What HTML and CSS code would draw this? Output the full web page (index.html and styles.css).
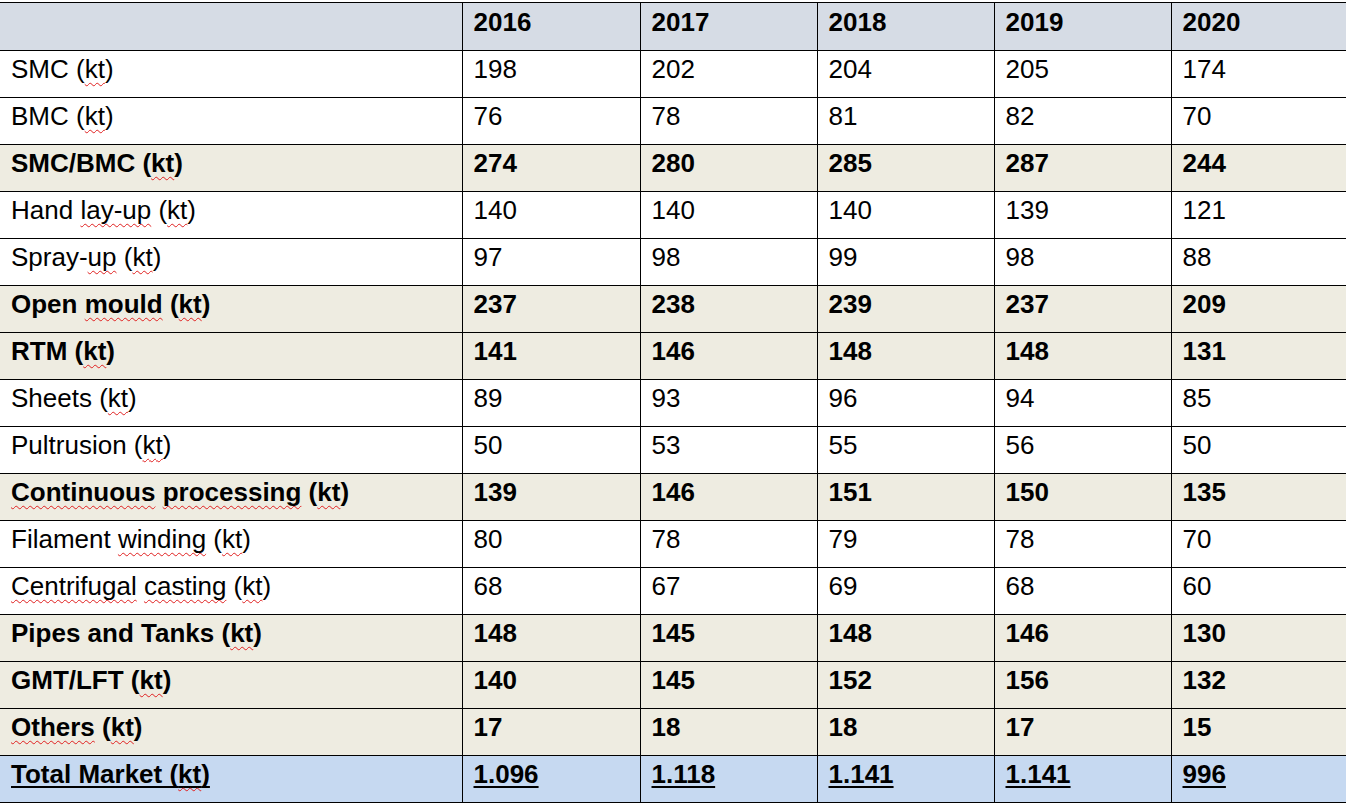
FILE: index.html
```html
<!DOCTYPE html>
<html>
<head>
<meta charset="utf-8">
<link rel="stylesheet" href="styles.css">
</head>
<body>
<div class="page">
<table class="data">
<colgroup>
<col class="c-label"><col class="c-a"><col class="c-b"><col class="c-b"><col class="c-b"><col class="c-last">
</colgroup>
<thead>
<tr class="head"><th></th><th>2016</th><th>2017</th><th>2018</th><th>2019</th><th>2020</th></tr>
</thead>
<tbody>
<tr><td>SMC (<span class="sp">kt</span>)</td><td>198</td><td>202</td><td>204</td><td>205</td><td>174</td></tr>
<tr><td>BMC (<span class="sp">kt</span>)</td><td>76</td><td>78</td><td>81</td><td>82</td><td>70</td></tr>
<tr class="sum"><td>SMC/BMC (<span class="sp">kt</span>)</td><td>274</td><td>280</td><td>285</td><td>287</td><td>244</td></tr>
<tr><td>Hand <span class="sp">lay-up</span> (<span class="sp">kt</span>)</td><td>140</td><td>140</td><td>140</td><td>139</td><td>121</td></tr>
<tr><td>Spray-<span class="sp">up</span> (<span class="sp">kt</span>)</td><td>97</td><td>98</td><td>99</td><td>98</td><td>88</td></tr>
<tr class="sum"><td>Open <span class="sp">mould</span> (<span class="sp">kt</span>)</td><td>237</td><td>238</td><td>239</td><td>237</td><td>209</td></tr>
<tr class="sum"><td>RTM (<span class="sp">kt</span>)</td><td>141</td><td>146</td><td>148</td><td>148</td><td>131</td></tr>
<tr><td>Sheets (<span class="sp">kt</span>)</td><td>89</td><td>93</td><td>96</td><td>94</td><td>85</td></tr>
<tr><td>Pultrusion (<span class="sp">kt</span>)</td><td>50</td><td>53</td><td>55</td><td>56</td><td>50</td></tr>
<tr class="sum"><td><span class="sp">Continuous</span> <span class="sp">processing</span> (<span class="sp">kt</span>)</td><td>139</td><td>146</td><td>151</td><td>150</td><td>135</td></tr>
<tr><td>Filament <span class="sp">winding</span> (<span class="sp">kt</span>)</td><td>80</td><td>78</td><td>79</td><td>78</td><td>70</td></tr>
<tr><td><span class="sp">Centrifugal</span> <span class="sp">casting</span> (<span class="sp">kt</span>)</td><td>68</td><td>67</td><td>69</td><td>68</td><td>60</td></tr>
<tr class="sum"><td>Pipes and Tanks (<span class="sp">kt</span>)</td><td>148</td><td>145</td><td>148</td><td>146</td><td>130</td></tr>
<tr class="sum"><td>GMT/LFT (<span class="sp">kt</span>)</td><td>140</td><td>145</td><td>152</td><td>156</td><td>132</td></tr>
<tr class="sum"><td><span class="sp">Others</span> (<span class="sp">kt</span>)</td><td>17</td><td>18</td><td>18</td><td>17</td><td>15</td></tr>
<tr class="total"><td><span class="ul">Total Market (<span class="sp">kt</span>)</span></td><td><span class="ul">1.096</span></td><td><span class="ul">1.118</span></td><td><span class="ul">1.141</span></td><td><span class="ul">1.141</span></td><td><span class="ul">996</span></td></tr>
</tbody>
</table>
</div>
</body>
</html>
```
FILE: styles.css
```css
html, body {
  margin: 0;
  padding: 0;
  background: #ffffff;
}
.page {
  width: 1346px;
  height: 806px;
  overflow: hidden;
  padding-top: 2px;
  box-sizing: border-box;
}
.data {
  border-collapse: collapse;
  table-layout: fixed;
  width: 1371px;
  font-family: "Liberation Sans", Arial, sans-serif;
  font-size: 26px;
  color: #000;
}
.c-label { width: 462px; }
.c-a { width: 178px; }
.c-b { width: 177px; }
.c-last { width: 200px; }
.data th, .data td {
  border: 1px solid #000;
  height: 47px;
  box-sizing: border-box;
  padding: 4px 11px 0 11px;
  vertical-align: top;
  text-align: left;
  line-height: 28px;
  white-space: nowrap;
}
.data tr > :first-child { border-left: none; }
.head th {
  background: #d6dce5;
  font-weight: bold;
  height: 48px;
  padding-top: 5px;
}
.sum td {
  background: #eeece1;
  font-weight: bold;
}
.total td {
  background: #c6d9f1;
  font-weight: bold;
}
.sp {
  text-decoration: underline wavy #e02020;
  text-decoration-thickness: 1px;
  text-underline-offset: 4px;
  text-decoration-skip-ink: none;
}
.ul {
  text-decoration: underline solid #000;
  text-decoration-thickness: 2px;
  text-underline-offset: 3px;
  text-decoration-skip-ink: none;
}
```
